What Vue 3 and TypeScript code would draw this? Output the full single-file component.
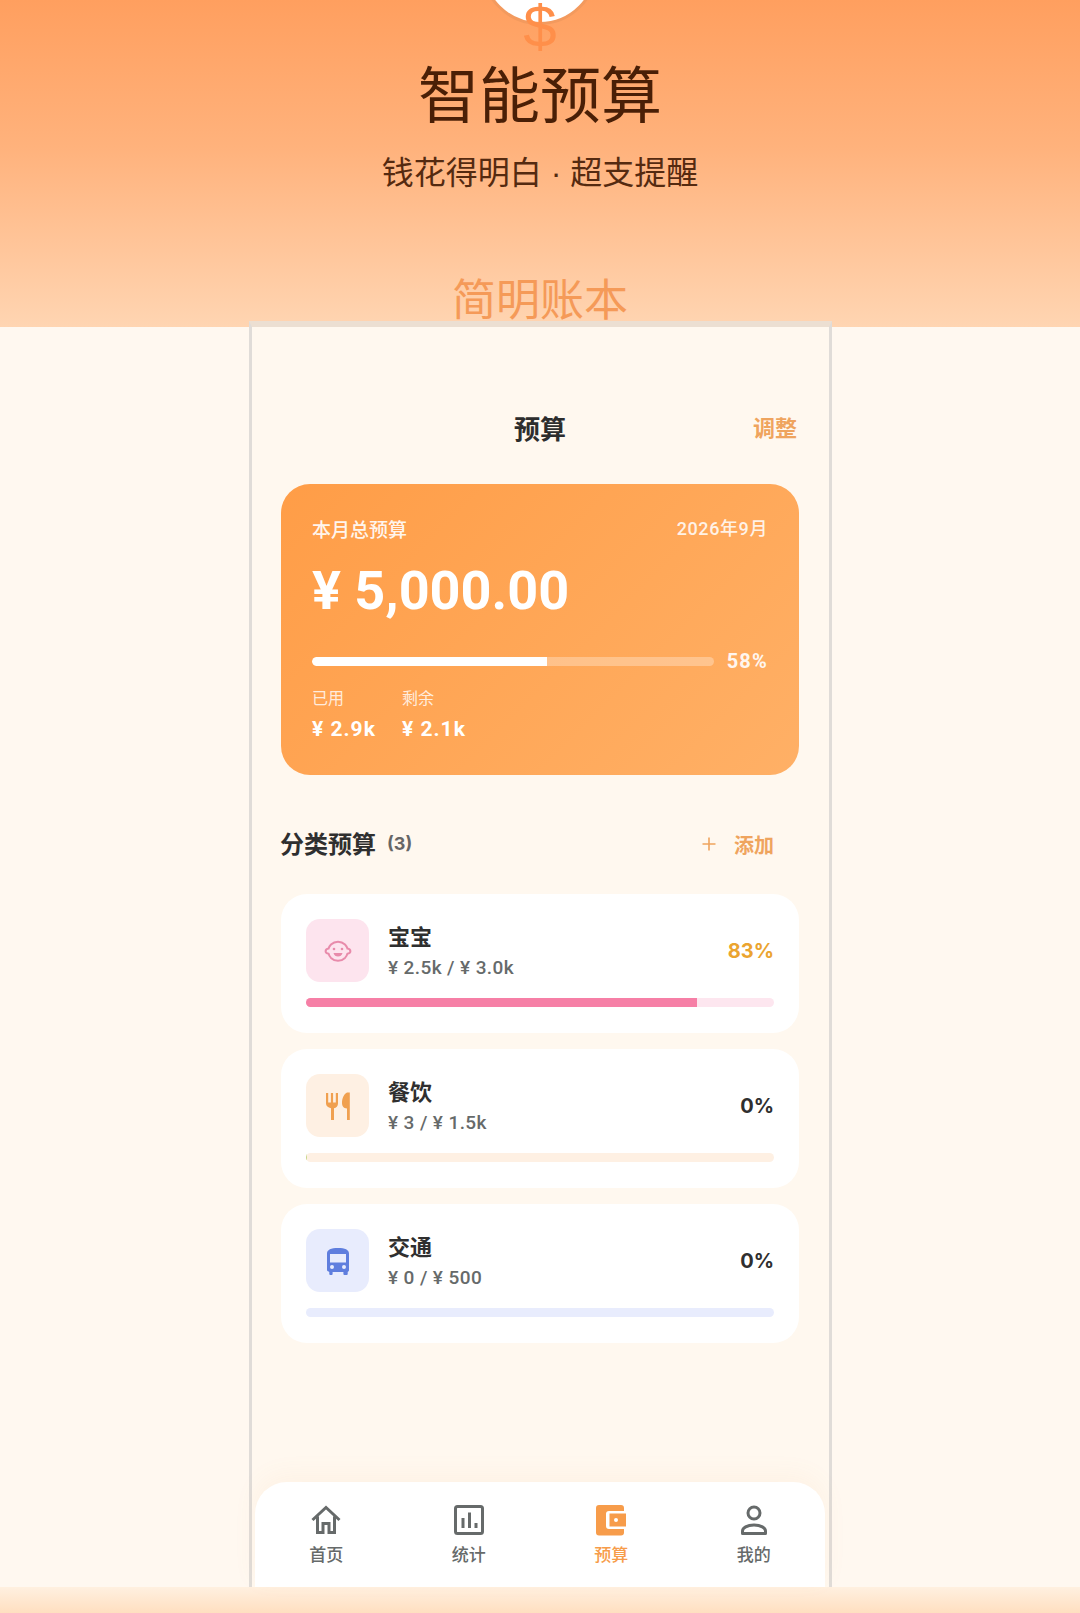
<template>
  <div class="page">
    <header class="hero">
      <div class="logo"></div>
      <div class="dollar">$</div>
      <h1>智能预算</h1>
      <p class="slogan">钱花得明白 · 超支提醒</p>
      <p class="brand">简明账本</p>
    </header>

    <main class="stage">
      <div class="phone">
        <div class="content">
          <div class="nav">
            <span class="nav-title">预算</span>
            <span class="nav-action">调整</span>
          </div>

          <section class="total">
            <div class="total-top">
              <span class="total-label">本月总预算</span>
              <span class="total-date">2026年9月</span>
            </div>
            <div class="total-amount">¥ 5,000.00</div>
            <div class="total-progress">
              <div class="total-track">
                <div class="total-fill" :style="{ width: usedFill + '%' }"></div>
              </div>
              <span class="total-percent">{{ usedPercent }}%</span>
            </div>
            <div class="total-stats">
              <div v-for="s in stats" :key="s.label" class="stat">
                <span class="stat-label">{{ s.label }}</span>
                <span class="stat-value">{{ s.value }}</span>
              </div>
            </div>
          </section>

          <div class="section-head">
            <h2>分类预算</h2>
            <span class="count">(3)</span>
            <button class="add">
              <svg viewBox="0 0 16 16" width="16" height="16" fill="none" stroke="currentColor" stroke-width="1.6">
                <path d="M8 1.5v13M1.5 8h13" />
              </svg>
              <span>添加</span>
            </button>
          </div>

          <div class="list">
            <div v-for="c in categories" :key="c.id" class="item" :class="c.id">
              <div class="item-row">
                <div class="item-icon">
                  <svg v-if="c.id === 'baby'" viewBox="0 0 32 32" width="32" height="32" fill="none" stroke="currentColor" stroke-width="2">
                    <path d="M9 9.5C11 7.6 13.4 6.7 16 6.7s5 .9 7 2.8c1.2 1.2 2 2.6 2.4 4.1 1.6.3 3 1.2 3 2.6s-1.4 2.3-3 2.6c-.4 1.5-1.2 2.900-2.400 4.100-2 1.900-4.400 2.800-7 2.800s-5-.9-7-2.800c-1.200-1.200-2-2.600-2.400-4.100-1.600-.3-3-1.200-3-2.600s1.400-2.300 3-2.600C7 12.100 7.800 10.700 9 9.500z" />
                    <circle cx="12" cy="14" r="1.300" fill="currentColor" stroke="none" />
                    <circle cx="20" cy="14" r="1.300" fill="currentColor" stroke="none" />
                    <path d="M11.500 18h9c-.6 2.400-2.300 3.600-4.500 3.600s-3.900-1.200-4.500-3.600z" fill="currentColor" stroke="none" />
                  </svg>
                  <svg v-else-if="c.id === 'food'" viewBox="0 0 32 32" width="32" height="32" fill="currentColor">
                    <path d="M4 3h2.200v9.500h2.700V3h2.200v9.500h2.700V3H16v10.500c0 2.500-1.700 4.300-4 4.800V30H9V18.300c-3-.6-5-2.500-5-4.800z" />
                    <path d="M25 2.500V30h2.800V2.500zM25 2.500c-3 1.500-5 5.800-5 10.500 0 3.100 1.400 5.200 5 5.500z" />
                  </svg>
                  <svg v-else viewBox="0 0 32 32" width="32" height="32" fill="currentColor">
                    <path fill-rule="evenodd" d="M16 3c7 0 11 1.800 11 5.500V25c0 .9-.5 1.600-1.300 1.900V29a1 1 0 0 1-1 1h-2.300a1 1 0 0 1-1-1v-1.900h-10.800V29a1 1 0 0 1-1 1H8.300a1 1 0 0 1-1-1v-2.100C6.500 26.600 5 25.900 5 25V8.500C5 4.800 9 3 16 3zM8 9v8.500h16V9zM10 20a2 2 0 1 0 0 4 2 2 0 0 0 0-4zm12 0a2 2 0 1 0 0 4 2 2 0 0 0 0-4z" />
                  </svg>
                </div>
                <div class="item-text">
                  <span class="item-name">{{ c.name }}</span>
                  <span class="item-sub">{{ c.sub }}</span>
                </div>
                <span class="item-percent">{{ c.percent }}%</span>
              </div>
              <div class="item-track">
                <div class="item-fill" :style="{ width: c.fill + '%' }"></div>
              </div>
            </div>
          </div>
        </div>

        <nav class="tabbar">
          <div v-for="t in tabs" :key="t.id" class="tab" :class="{ active: t.id === 'budget' }">
            <svg v-if="t.id === 'home'" viewBox="0 0 32 32" width="32" height="32" fill="none" stroke="currentColor" stroke-width="3">
              <path d="M2.500 16 16 3.500 29.500 16M7.500 12.500V28.500h5.500v-9h6v9h5.500V12.500" />
            </svg>
            <svg v-else-if="t.id === 'stats'" viewBox="0 0 32 32" width="32" height="32" fill="none" stroke="currentColor" stroke-width="3">
              <rect x="2.500" y="2.500" width="27" height="27" rx="2" />
              <path d="M10 14v10M16.500 8.500V24M23 19v5" />
            </svg>
            <svg v-else-if="t.id === 'budget'" viewBox="0 0 32 32" width="32" height="32" fill="currentColor">
              <path fill-rule="evenodd" d="M4 1h22a3 3 0 0 1 3 3v3H14a3 3 0 0 0-3 3v12a3 3 0 0 0 3 3h15v3.500a3 3 0 0 1-3 3H4a3 3 0 0 1-3-3V4a3 3 0 0 1 3-3z" />
              <path fill-rule="evenodd" d="M14.500 9.500H31v13H14.500zM21 14a2 2 0 1 0 0 4 2 2 0 0 0 0-4z" />
            </svg>
            <svg v-else viewBox="0 0 32 32" width="32" height="32" fill="none" stroke="currentColor" stroke-width="3">
              <circle cx="16" cy="9" r="6" />
              <path d="M4.500 29.500v-2.500c0-3 4.500-6 11.500-6s11.500 3 11.500 6v2.500z" stroke-linejoin="round" />
            </svg>
            <span class="tab-label">{{ t.label }}</span>
          </div>
        </nav>
      </div>
    </main>

    <div class="foot"></div>
  </div>
</template>

<script setup lang="ts">
interface Category {
  id: string
  name: string
  sub: string
  percent: number
  fill: number
}

const usedPercent = 58
const usedFill = 58.6

const stats = [
  { label: '已用', value: '¥ 2.9k' },
  { label: '剩余', value: '¥ 2.1k' },
]

const categories: Category[] = [
  { id: 'baby', name: '宝宝', sub: '¥ 2.5k / ¥ 3.0k', percent: 83, fill: 83.500 },
  { id: 'food', name: '餐饮', sub: '¥ 3 / ¥ 1.5k', percent: 0, fill: 0.300 },
  { id: 'bus', name: '交通', sub: '¥ 0 / ¥ 500', percent: 0, fill: 0 },
]

const tabs = [
  { id: 'home', label: '首页' },
  { id: 'stats', label: '统计' },
  { id: 'budget', label: '预算' },
  { id: 'me', label: '我的' },
]
</script>

<style>
html, body {
  margin: 0;
  background: #fff8f0;
}
</style>

<style scoped>
.page {
  width: 1080px;
  height: 1613px;
  display: flex;
  flex-direction: column;
  overflow: hidden;
  font-family: Inter, "Noto Sans CJK SC", sans-serif;
  background: #fff8f0;
}

.hero {
  position: relative;
  height: 327px;
  flex-shrink: 0;
  overflow: hidden;
  text-align: center;
  background: linear-gradient(180deg, #ff9f5f 0%, #ffb27c 45%, #ffd5b2 100%);
  font-family: "Noto Sans CJK SC", sans-serif;
}

.logo {
  position: absolute;
  left: 481px;
  top: -92px;
  box-sizing: border-box;
  width: 117px;
  height: 117px;
  border: 3px solid #f39a5e;
  border-radius: 50%;
  background: #fff;
}

.dollar {
  position: absolute;
  left: 0;
  right: 0;
  top: -7px;
  font-family: "Liberation Sans", sans-serif;
  font-size: 60px;
  line-height: 68px;
  color: #ff8f4a;
}

.hero h1 {
  margin: 0;
  padding-top: 52px;
  font-size: 61px;
  font-weight: 400;
  line-height: 80px;
  color: #4a1f06;
}

.slogan {
  margin: 19px 0 0;
  font-family: "Liberation Sans", "Noto Sans CJK SC", sans-serif;
  font-size: 32px;
  font-weight: 400;
  line-height: 44px;
  color: #552a10;
}

.brand {
  margin: 72px 0 0;
  font-size: 44px;
  font-weight: 400;
  line-height: 60px;
  color: #f59a58;
}

.stage {
  flex: 1;
  display: flex;
  justify-content: center;
  min-height: 0;
  padding-left: 1px;
}

.phone {
  position: relative;
  width: 577px;
  margin-top: -6px;
  box-sizing: content-box;
  display: flex;
  flex-direction: column;
  border: 3px solid #e0dcd8;
  border-top: 6px solid #ecdfd2;
  border-bottom: 0;
  background: #fff8ef;
}

.content {
  padding: 0 30px 0 29px;
}

.nav {
  display: flex;
  justify-content: center;
  position: relative;
  padding-top: 84px;
  height: 72px;
}

.nav-title {
  padding-top: 1px;
  font-size: 26px;
  font-weight: 700;
  line-height: 36px;
  color: #2d2d2d;
}

.nav-action {
  position: absolute;
  right: 2px;
  top: 83px;
  font-size: 22px;
  font-weight: 700;
  line-height: 36px;
  color: #efa45e;
}

.total {
  box-sizing: border-box;
  height: 291px;
  margin-top: 1px;
  padding: 32px 31px 0;
  border-radius: 29px;
  color: #fff;
  background: linear-gradient(135deg, #ff9d47 0%, #ffb066 100%);
}

.total-top {
  display: flex;
  justify-content: space-between;
  align-items: center;
  line-height: 28px;
}

.total-label {
  font-size: 19px;
  font-weight: 500;
  opacity: 0.9;
  padding-top: 1px;
}

.total-date {
  margin-top: -3px;
  font-family: Roboto, "Noto Sans CJK SC", sans-serif;
  font-size: 18px;
  font-weight: 500;
  letter-spacing: 0.6px;
  opacity: 0.85;
}

.total-amount {
  margin-top: 15px;
  font-family: Roboto, "Noto Sans CJK SC", sans-serif;
  font-size: 54px;
  font-weight: 700;
  line-height: 62px;
}

.total-progress {
  display: flex;
  align-items: center;
  gap: 13px;
  margin-top: 27px;
}

.total-track {
  flex: 1;
  height: 9px;
  border-radius: 5px;
  overflow: hidden;
  background: rgba(255, 255, 255, 0.3);
}

.total-fill {
  height: 100%;
  border-radius: 5px 0 0 5px;
  background: #fff;
}

.total-percent {
  font-family: Roboto, sans-serif;
  font-size: 20px;
  font-weight: 700;
  line-height: 24px;
  letter-spacing: 1.2px;
  opacity: 0.9;
}

.total-stats {
  display: flex;
  gap: 26px;
  margin-top: 14px;
}

.stat {
  display: flex;
  flex-direction: column;
  width: 64px;
}

.stat-label {
  font-size: 16px;
  line-height: 22px;
  opacity: 0.8;
}

.stat-value {
  margin-top: 7px;
  font-family: Roboto, "Noto Sans CJK SC", sans-serif;
  font-size: 21px;
  font-weight: 700;
  line-height: 26px;
  letter-spacing: 1px;
  white-space: nowrap;
}

.section-head {
  display: flex;
  align-items: center;
  height: 34px;
  margin-top: 53px;
}

.section-head h2 {
  margin: 0 0 0 -1px;
  font-size: 24px;
  font-weight: 700;
  line-height: 34px;
  color: #2f2f2f;
}

.count {
  margin: -3px 0 0 11px;
  font-size: 18px;
  font-weight: 700;
  color: #666;
}

.add {
  display: flex;
  align-items: center;
  gap: 17px;
  margin: -2px 25px 0 auto;
  padding: 0;
  border: 0;
  background: none;
  font-family: inherit;
  font-size: 20px;
  font-weight: 700;
  color: #efa45e;
}

.list {
  display: flex;
  flex-direction: column;
  gap: 16px;
  margin-top: 32px;
}

.item {
  box-sizing: border-box;
  height: 139px;
  padding: 25px 25px 0;
  border-radius: 26px;
  background: #fff;
}

.item-row {
  display: flex;
  align-items: center;
}

.item-icon {
  width: 63px;
  height: 63px;
  flex-shrink: 0;
  display: flex;
  align-items: center;
  justify-content: center;
  border-radius: 14px;
}

.item-text {
  flex: 1;
  display: flex;
  flex-direction: column;
  margin-left: 19px;
  padding-top: 1px;
}

.item-name {
  font-size: 22px;
  font-weight: 700;
  line-height: 30px;
  color: #2f2f2f;
}

.item-sub {
  margin-top: 3px;
  font-family: Roboto, "Noto Sans CJK SC", sans-serif;
  font-size: 19px;
  font-weight: 500;
  line-height: 26px;
  letter-spacing: 0.4px;
  color: #666a6a;
}

.item-percent {
  font-size: 20px;
  font-weight: 700;
  color: #2f2f2f;
}

.item-track {
  height: 9px;
  margin-top: 16px;
  border-radius: 5px;
  overflow: hidden;
}

.item-fill {
  height: 100%;
}

.baby .item-icon { background: #fde4ee; color: #e88bab; }
.baby .item-track { background: #fde6ef; }
.baby .item-fill { background: #f67fa6; }
.baby .item-percent { color: #eba42f; }

.food .item-icon { background: #fef0e3; color: #f0a050; }
.food .item-track { background: #fef0e3; }
.food .item-fill { background: #c8d88c; }

.bus .item-icon { background: #e8ecfd; color: #5f7ede; }
.bus .item-track { background: #e8ecfd; }
.bus .item-fill { background: #5f7ede; }

.tabbar {
  display: flex;
  margin: auto 4px 0 3px;
  height: 105px;
  padding-top: 22px;
  box-sizing: border-box;
  border-radius: 32px 32px 0 0;
  background: #fff;
  box-shadow: 0 -8px 24px rgba(240, 160, 90, 0.06);
}

.tab {
  flex: 1;
  display: flex;
  flex-direction: column;
  align-items: center;
  gap: 7px;
  color: #666a6a;
}

.tab.active {
  color: #f79c4a;
}

.tab-label {
  font-size: 17px;
  font-weight: 500;
  line-height: 24px;
}

.foot {
  height: 26px;
  flex-shrink: 0;
  background: linear-gradient(180deg, #fff0e0 0%, #ffdfc0 100%);
}
</style>
